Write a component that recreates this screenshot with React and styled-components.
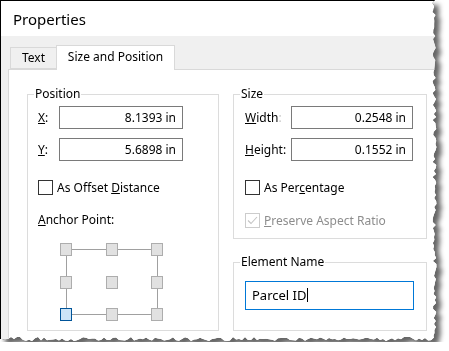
import React from 'react'
import styled, { createGlobalStyle } from 'styled-components'

//-- properties dialog, "Size and Position" tab, with a torn-paper edge

const GlobalStyle = createGlobalStyle`
  body {
    margin: 0;
    background: #fff;
    font-family: "Noto Sans", "Segoe UI", sans-serif;
    color: #000;
  }
`

// jagged right / bottom edge of the screenshot clipping
const tornEdge = (() => {
  let seed = 11
  const rand = () => {
    seed = (seed * 16807) % 2147483647
    return seed / 2147483647
  }
  const pts = ['0px 0px', '435px 0px']
  for (let y = 3; y < 339; y += 3) pts.push(`${(432.5 + rand() * 4).toFixed(1)}px ${y}px`)
  for (let x = 434; x > 0; x -= 3) pts.push(`${x}px ${(337 + rand() * 4).toFixed(1)}px`)
  pts.push('0px 339px')
  return `polygon(${pts.join(', ')})`
})()

const Shadow = styled.div`
  width: 438px;
  height: 342px;
  filter: drop-shadow(0 0 0.6px rgba(0,0,0,0.95)) drop-shadow(5px 5px 2.5px rgba(0,0,0,0.6));
`

const Window = styled.div`
  height: 100%;
  box-sizing: border-box;
  display: flex;
  flex-direction: column;
  background: #fff;
  border-top: 1px solid #000;
  border-left: 1px solid #000;
  clip-path: ${tornEdge};
  overflow: hidden;
`

const TitleBar = styled.div`
  height: 35px;
  flex: none;
  display: flex;
  align-items: center;
  padding-left: 12px;
  font-size: 15px;
  color: #000;
`

const Body = styled.div`
  flex: 1;
  display: flex;
  flex-direction: column;
  background: #f0f0f0;
  padding: 9px 0 0 7px;
`

const TabRow = styled.div`
  display: flex;
  align-items: flex-end;
  height: 24px;
  padding-left: 2px;
  position: relative;
  z-index: 1;
`

const Tab = styled.div`
  box-sizing: border-box;
  width: ${p => p.$width}px;
  height: ${p => (p.$active ? 25 : 22)}px;
  margin-bottom: ${p => (p.$active ? -1 : 0)}px;
  margin-left: ${p => (p.$active ? -1 : 0)}px;
  border: 1px solid #d9d9d9;
  border-bottom: ${p => (p.$active ? 'none' : '1px solid #d9d9d9')};
  background: ${p => (p.$active ? '#fff' : '#f0f0f0')};
  display: flex;
  justify-content: center;
  padding-top: ${p => (p.$active ? 2 : 1)}px;
  font-size: 12px;
  line-height: 17px;
`

const Panel = styled.div`
  width: 460px;
  flex: 1;
  background: #fff;
  border: 1px solid #d9d9d9;
  display: flex;
  gap: 14px;
  align-items: flex-start;
  padding: 24px 0 0 18px;
`

const Column = styled.div`
  display: flex;
  flex-direction: column;
  gap: 23px;
`

const Group = styled.div`
  position: relative;
  box-sizing: border-box;
  width: ${p => p.$width}px;
  height: ${p => p.$height}px;
  border: 1px solid #dcdcdc;
  display: flex;
  flex-direction: column;
  align-items: flex-start;
  padding: ${p => p.$pad || '11px 0 0 10px'};
`

const Legend = styled.span`
  position: absolute;
  top: -9px;
  left: 6px;
  padding: 0 1px;
  background: #fff;
  font-size: 12px;
  line-height: 16px;
`

const FieldRow = styled.div`
  display: flex;
  align-items: center;
  height: 23px;
  margin-top: ${p => p.$top || 0}px;
`

const Label = styled.label`
  width: ${p => p.$width}px;
  font-size: 12px;
  line-height: 16px;
  flex: none;
`

const Faint = styled.span`
  color: #c8c8c8;
`

const NumberBox = styled.input`
  box-sizing: border-box;
  width: ${p => p.$width}px;
  height: 23px;
  border: 1px solid #7a7a7a;
  padding: 0 6px 1px 0;
  text-align: right;
  font-family: "Noto Sans", "Segoe UI", sans-serif;
  font-size: 12px;
  color: #000;
  background: #fff;
  outline: none;
`

const CheckRow = styled.div`
  display: flex;
  align-items: center;
  gap: 4px;
  height: 15px;
  margin-top: ${p => p.$top}px;
  font-size: 12px;
  color: ${p => (p.$disabled ? '#8d8d8d' : '#000')};
`

const Box = styled.span`
  box-sizing: border-box;
  width: 15px;
  height: 15px;
  border: 1px solid ${p => (p.$disabled ? '#cccccc' : '#333')};
  background: #fff;
  display: flex;
  align-items: center;
  justify-content: center;
`

const Caption = styled.div`
  font-size: 12px;
  line-height: 16px;
  margin-top: ${p => p.$top}px;
`

const AnchorGrid = styled.div`
  display: grid;
  grid-template-columns: 12px 34px 12px 33px 12px;
  grid-template-rows: 13px 20px 13px 19px 13px;
  margin: 15px 0 0 22px;
`

const Handle = styled.div`
  box-sizing: border-box;
  border: 1px solid ${p => (p.$selected ? '#005499' : '#adadad')};
  background: ${p => (p.$selected ? '#cce4f7' : '#e1e1e1')};
`

const Connector = styled.div`
  background: #a0a0a0;
  align-self: center;
  justify-self: center;
  width: ${p => (p.$vertical ? '1px' : '100%')};
  height: ${p => (p.$vertical ? '100%' : '1px')};
`

const TextBox = styled.div`
  box-sizing: border-box;
  width: 169px;
  height: 29px;
  margin-top: 18px;
  border: 1px solid #0078d7;
  display: flex;
  align-items: center;
  padding: 0 0 1px 6px;
  font-size: 13px;
`

const Caret = styled.span`
  width: 1px;
  height: 14px;
  margin-left: 1px;
  background: #000;
`

const Check = ({ checked, disabled }) => (
  <Box $disabled={disabled}>
    {checked && (
      <svg width="11" height="9" viewBox="0 0 11 9">
        <path d="M1 4.5 L4 7.5 L10 1" fill="none" stroke={disabled ? '#c4c4c4' : '#000'} strokeWidth="1.1" />
      </svg>
    )}
  </Box>
)

const Anchor = ({ selected }) => {
  const cells = []
  for (let r = 0; r < 5; r++) {
    for (let c = 0; c < 5; c++) {
      const key = `${r}-${c}`
      if (r % 2 === 0 && c % 2 === 0) {
        cells.push(<Handle key={key} $selected={selected === key} />)
      } else if (r % 2 === 0 && c % 2 === 1 && r !== 2) {
        cells.push(<Connector key={key} />)
      } else if (r % 2 === 1 && c % 2 === 0 && c !== 2) {
        cells.push(<Connector key={key} $vertical />)
      } else {
        cells.push(<span key={key} />)
      }
    }
  }
  return <AnchorGrid>{cells}</AnchorGrid>
}

export default function App() {
  return (
    <>
      <GlobalStyle />
      <Shadow>
        <Window>
          <TitleBar>Properties</TitleBar>
          <Body>
            <TabRow>
              <Tab $width={47}>Text</Tab>
              <Tab $width={119} $active>Size and Position</Tab>
            </TabRow>
            <Panel>
              <Group $width={192} $height={237}>
                <Legend>Position</Legend>
                <FieldRow>
                  <Label $width={21}><u>X</u>:</Label>
                  <NumberBox $width={124} readOnly value="8.1393 in" />
                </FieldRow>
                <FieldRow $top={9}>
                  <Label $width={21}><u>Y</u>:</Label>
                  <NumberBox $width={124} readOnly value="5.6898 in" />
                </FieldRow>
                <CheckRow $top={19}>
                  <Check />
                  <span>As Offset <u>D</u>istance</span>
                </CheckRow>
                <Caption $top={17}><u>A</u>nchor Point:</Caption>
                <Anchor selected="4-0" />
              </Group>
              <Column>
                <Group $width={194} $height={145} $pad="11px 0 0 11px">
                  <Legend>Size</Legend>
                  <FieldRow>
                    <Label $width={46}><u>W</u>idth<Faint>:</Faint></Label>
                    <NumberBox $width={122} readOnly value="0.2548 in" />
                  </FieldRow>
                  <FieldRow $top={9}>
                    <Label $width={46}><u>H</u>eight:</Label>
                    <NumberBox $width={122} readOnly value="0.1552 in" />
                  </FieldRow>
                  <CheckRow $top={19}>
                    <Check />
                    <span>As Per<u>c</u>entage</span>
                  </CheckRow>
                  <CheckRow $top={18} $disabled>
                    <Check checked disabled />
                    <span><u>P</u>reserve Aspect Ratio</span>
                  </CheckRow>
                </Group>
                <Group $width={194} $height={69} $pad="0 0 0 11px">
                  <Legend>Element Name</Legend>
                  <TextBox>
                    Parcel ID<Caret />
                  </TextBox>
                </Group>
              </Column>
            </Panel>
          </Body>
        </Window>
      </Shadow>
    </>
  )
}
